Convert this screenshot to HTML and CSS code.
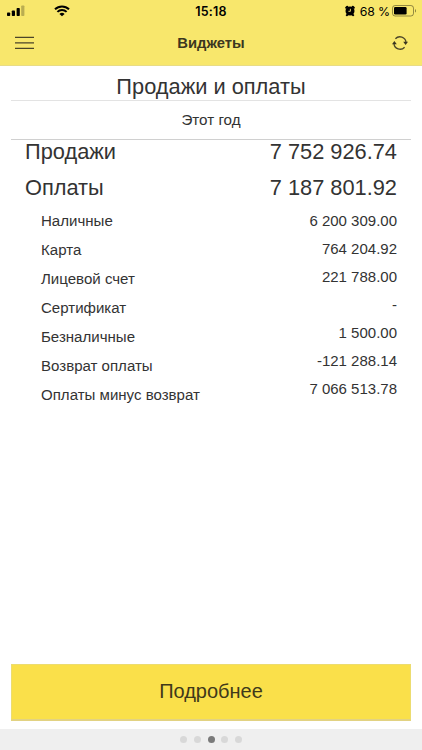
FILE: index.html
```
<!DOCTYPE html>
<html lang="ru">
<head>
    <meta charset="UTF-8">
    <meta name="viewport" content="width=device-width, initial-scale=1.0">
    <title>Виджеты</title>
    <link rel="stylesheet" href="styles.css">
</head>
<body>
    <div class="app">
        <div class="top">
            <div class="status-bar">
                <div class="status-left">
                    <svg class="signal" width="18" height="12" viewBox="0 0 18 12">
                        <rect x="0" y="7.5" width="3.2" height="3.5" rx="0.8"/>
                        <rect x="4.8" y="5.4" width="3.2" height="5.6" rx="0.8"/>
                        <rect x="9.6" y="3" width="3.2" height="8" rx="0.8"/>
                        <rect x="14.2" y="0.4" width="3.2" height="10.6" rx="0.8" opacity="0.25"/>
                    </svg>
                    <svg class="wifi" width="16" height="12" viewBox="0 0 16 12">
                        <path d="M1 4.3a10 10 0 0 1 14 0M3.4 6.9a6.6 6.6 0 0 1 9.2 0" fill="none" stroke="#000" stroke-width="2"/>
                        <path d="M8 11.3L5.4 8.9a3.8 3.8 0 0 1 5.2 0z"/>
                    </svg>
                </div>
                <div class="time">15:18</div>
                <div class="status-right">
                    <svg class="alarm" width="10" height="12" viewBox="0 0 10 12">
                        <circle cx="5" cy="6" r="4.5"/>
                        <path d="M1.2 2.8L2.2 1.8M8.8 2.8L7.8 1.8M1.8 10.2L3 9.2M8.2 10.2L7 9.2" stroke="#000" stroke-width="2" stroke-linecap="round"/>
                        <path d="M5.4 3.8V6.3H3.4" fill="none" stroke="#f8e76c" stroke-width="0.9"/>
                    </svg>
                    <span class="percent">68 %</span>
                    <svg class="battery" width="25" height="12" viewBox="0 0 25 12">
                        <rect x="0.5" y="0.5" width="21" height="10.5" rx="2.6" fill="none" stroke="#000" stroke-opacity="0.4"/>
                        <rect x="2" y="2" width="12.6" height="7.5" rx="1.2"/>
                        <path d="M23 4v3.6c1.3-.5 1.3-3.1 0-3.6z" opacity="0.45"/>
                    </svg>
                </div>
            </div>
            <div class="nav-bar">
                <svg class="menu-icon" width="19" height="14" viewBox="0 0 19 14">
                    <path d="M0 1.4H19M0 6.9H19M0 12.4H19" stroke="#4b4528" stroke-width="1.3"/>
                </svg>
                <h1 class="nav-title">Виджеты</h1>
                <svg class="refresh-icon" width="16" height="16" viewBox="0 0 16 16">
                    <path d="M3.4 3.8A6.1 6.1 0 0 1 14 7.4M12.6 12.2A6.1 6.1 0 0 1 2 8.6" fill="none" stroke="#4b4528" stroke-width="1.3"/>
                    <path d="M11.2 6.8H16L13.6 10zM0 9.2H4.8L2.4 6z" fill="#3a3520"/>
                </svg>
            </div>
        </div>

        <div class="widget">
            <h2 class="widget-title">Продажи и оплаты</h2>
            <div class="period">Этот год</div>

            <div class="total"><span>Продажи</span><span class="sum">7 752 926.74</span></div>
            <div class="total"><span>Оплаты</span><span class="sum">7 187 801.92</span></div>

            <div class="details">
                <div class="labels">
                    <div>Наличные</div>
                    <div>Карта</div>
                    <div>Лицевой счет</div>
                    <div>Сертификат</div>
                    <div>Безналичные</div>
                    <div>Возврат оплаты</div>
                    <div>Оплаты минус возврат</div>
                </div>
                <div class="values">
                    <div>6 200 309.00</div>
                    <div>764 204.92</div>
                    <div>221 788.00</div>
                    <div>-</div>
                    <div>1 500.00</div>
                    <div>-121 288.14</div>
                    <div>7 066 513.78</div>
                </div>
            </div>

            <button class="more">Подробнее</button>
        </div>

        <div class="pager">
            <span class="dot"></span>
            <span class="dot"></span>
            <span class="dot active"></span>
            <span class="dot"></span>
            <span class="dot"></span>
        </div>
    </div>
</body>
</html>
```
FILE: styles.css
```
* {
    box-sizing: border-box;
}
body {
    margin: 0;
    font-family: "Liberation Sans", Arial, sans-serif;
    background-color: #fff;
    color: #333;
}
.app {
    display: flex;
    flex-direction: column;
    height: 100vh;
    overflow: hidden;
}

/* status bar and navigation */
.top {
    height: 66px;
    background-color: #f8e76c;
    border-bottom: 1px solid #e8dc86;
}
.status-bar {
    display: grid;
    grid-template-columns: 1fr auto 1fr;
    align-items: center;
    height: 22px;
    padding: 0 7px;
    color: #000;
    font-family: Inter, sans-serif;
}
.status-left {
    display: flex;
    align-items: center;
    gap: 29px;
}
.time {
    font-size: 12.5px;
    font-weight: 600;
    letter-spacing: 0.2px;
}
.status-right {
    display: flex;
    align-items: center;
    justify-content: flex-end;
    margin-right: -2px;
}
.percent {
    margin: 0 2px 0 5px;
    font-size: 12.3px;
    letter-spacing: -0.1px;
}
.nav-bar {
    display: flex;
    align-items: center;
    justify-content: space-between;
    height: 42px;
    padding: 0 14px 0 15px;
}
.nav-title {
    margin: 0 4px 0 0;
    font-size: 14.8px;
    color: #3c3720;
}

/* widget */
.widget {
    flex: 1;
    display: flex;
    flex-direction: column;
    padding: 0 11px 8px;
}
.widget-title {
    margin: 0;
    height: 35px;
    padding-top: 7px;
    border-bottom: 1px solid #e3e3e3;
    font-size: 21.8px;
    font-weight: normal;
    line-height: 27px;
    text-align: center;
}
.period {
    height: 39px;
    border-bottom: 1px solid #d0d0d0;
    font-size: 15.2px;
    line-height: 38px;
    text-align: center;
}
.total {
    display: flex;
    justify-content: space-between;
    height: 36px;
    padding: 0 14px;
    font-size: 21.8px;
    line-height: 24px;
}
.details {
    display: flex;
    justify-content: space-between;
    margin-top: -6px;
    padding: 0 14px 0 30px;
    font-size: 15.05px;
}
.labels {
    line-height: 29px;
}
.values {
    padding-top: 1px;
    line-height: 28px;
    font-size: 15px;
    text-align: right;
}
.more {
    height: 57px;
    margin-top: auto;
    padding: 0 0 1px;
    border: 1px solid #ecdc70;
    border-bottom: 2px solid #e2d282;
    background-color: #fae04a;
    color: #40391a;
    font-family: inherit;
    font-size: 20px;
}

/* page dots */
.pager {
    display: flex;
    justify-content: center;
    align-items: center;
    gap: 6.6px;
    height: 21px;
    background-color: #efefef;
}
.dot {
    width: 7px;
    height: 7px;
    border-radius: 50%;
    background-color: #d8d8d8;
}
.dot.active {
    background-color: #7a7a7a;
}
```
